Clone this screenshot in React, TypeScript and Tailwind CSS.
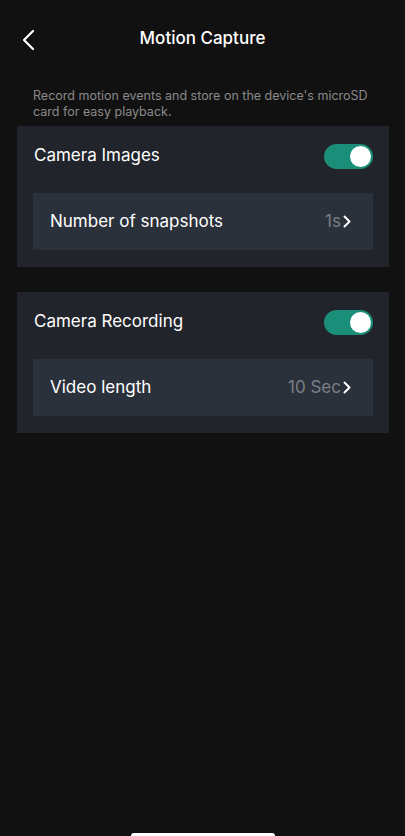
import React, { useState } from "react";

function Toggle({ on, onChange }: { on: boolean; onChange: () => void }) {
  return (
    <button
      onClick={onChange}
      className={`w-[49px] h-[25px] rounded-full flex items-center px-[2px] ${
        on ? "bg-[#1b8e79] justify-end" : "bg-[#3a3f47] justify-start"
      }`}
    >
      <span className="w-[21px] h-[21px] rounded-full bg-white" />
    </button>
  );
}

function Chevron() {
  return (
    <svg width="8" height="13" viewBox="0 0 8 13" fill="none">
      <path
        d="M1.5 1.5L6.5 6.5L1.5 11.5"
        stroke="white"
        strokeWidth="2"
        strokeLinecap="round"
        strokeLinejoin="round"
      />
    </svg>
  );
}

function SettingCard({
  title,
  label,
  value,
}: {
  title: string;
  label: string;
  value: string;
}) {
  const [on, setOn] = useState(true);
  return (
    <div className="ml-[17px] mr-[16px] bg-[#21242b] px-4 pb-[17px]">
      <div className="h-[60px] flex items-center justify-between pl-[1px]">
        <p className="text-[17px] text-white">{title}</p>
        <Toggle on={on} onChange={() => setOn(!on)} />
      </div>
      <div className="mt-[7px] h-[57px] bg-[#2b313a] flex items-center justify-between pl-[17px] pr-[22px]">
        <p className="text-[17px] text-white">{label}</p>
        <div className="flex items-center gap-[2px]">
          <span className="text-[17px] text-[#7b7f86]">{value}</span>
          <Chevron />
        </div>
      </div>
    </div>
  );
}

export default function App() {
  return (
    <div
      className="w-[405px] h-[836px] bg-[#111111] flex flex-col overflow-hidden"
      style={{ fontFamily: "Inter, 'Noto Sans', sans-serif" }}
    >
      <div className="h-[78px] flex items-center relative">
        <button className="absolute left-[22px] top-[29px]">
          <svg width="14" height="22" viewBox="0 0 14 22" fill="none">
            <path
              d="M11 2L2 11L11 20"
              stroke="white"
              strokeWidth="2.2"
              strokeLinecap="round"
              strokeLinejoin="round"
            />
          </svg>
        </button>
        <p className="w-full text-center text-[17px] font-medium text-white">
          Motion Capture
        </p>
      </div>

      <p className="mt-[10px] px-[33px] text-[12.5px] leading-4 text-[#8a8a8a]">
        Record motion events and store on the device's microSD card for easy
        playback.
      </p>

      <div className="mt-[6px] flex flex-col gap-[25px]">
        <SettingCard
          title="Camera Images"
          label="Number of snapshots"
          value="1s"
        />
        <SettingCard
          title="Camera Recording"
          label="Video length"
          value="10 Sec"
        />
      </div>

      <div className="mt-auto mx-auto w-[144px] h-[3px] bg-white rounded-t-full" />
    </div>
  );
}
